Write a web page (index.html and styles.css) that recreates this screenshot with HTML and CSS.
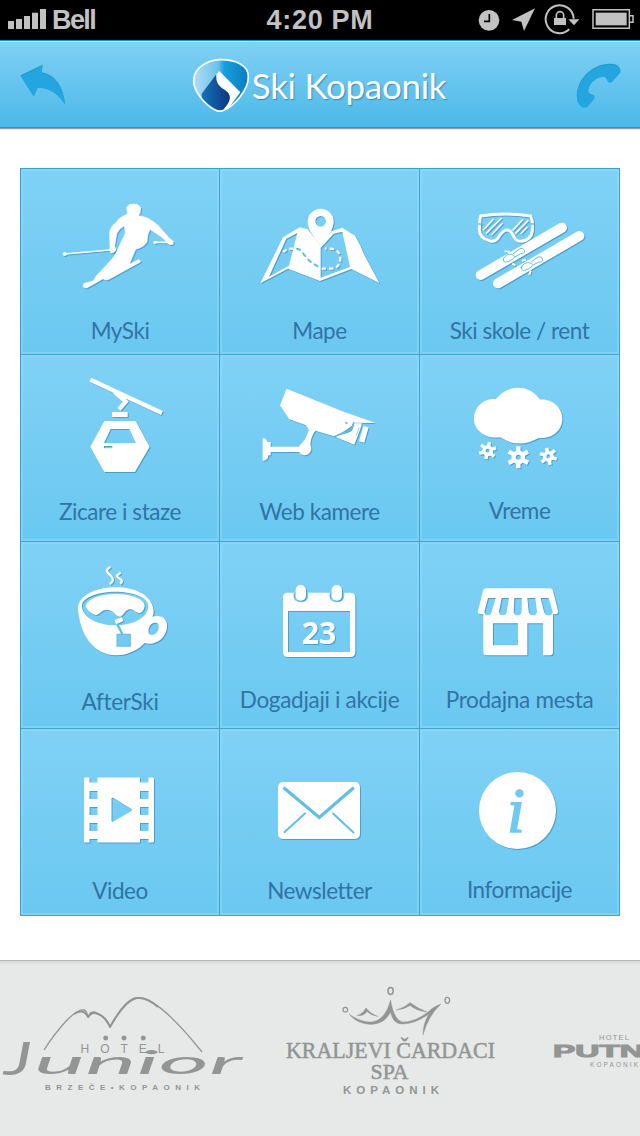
FILE: index.html
```html
<!DOCTYPE html>
<html lang="sr">
<head>
<meta charset="utf-8">
<title>Ski Kopaonik</title>
<link rel="stylesheet" href="styles.css">
</head>
<body>
<div class="status">
  <div class="carrier">
    <svg width="39" height="40" viewBox="24 0 117 120"><path d="M24 63h18v24H24zM48 57h18v30H48zM72 48h18v39H72zM96 38h18v49H96zM120 27h18v60h-18z"/></svg>
    <span>Bell</span>
  </div>
  <div class="clock">4:20 PM</div>
  <svg class="indicators" width="164" height="40" viewBox="468 0 492 120">
    <circle cx="507" cy="61" r="31"/>
    <path d="M508 42v22h-16" class="cut"/>
    <path d="M645 25L576 60l28 5 8 28z"/>
    <path d="M748 88A42 42 0 1 1 761 56" class="ring"/>
    <path d="M745 58h33l-16 18zM702 54h36v21h-36z"/>
    <path d="M709 56V46a11 11 0 0 1 22 0v10" class="shackle"/>
    <path d="M819 29h109v56H819zM930 47h9v20h-9" class="ring thin"/>
    <path d="M827 38h93v38h-93z"/>
  </svg>
</div>

<header class="topbar">
  <svg class="tool" width="60" height="60" viewBox="60 165 180 180"><path d="M62 229L128 197l-4 23c42 6 66 44 71 94-18-29-44-50-81-51l-13 27z"/></svg>
  <div class="brand">
    <svg width="58" height="60" viewBox="573 165 174 180">
      <defs>
        <linearGradient id="sky" x1="0" y1="0" x2="1" y2="0"><stop offset="0" stop-color="#b9e0f7"/><stop offset=".45" stop-color="#6cc2ec"/><stop offset=".55" stop-color="#17a0dc"/><stop offset="1" stop-color="#0879bd"/></linearGradient>
        <linearGradient id="deep" x1="0" y1="0" x2="1" y2="0"><stop offset="0" stop-color="#1473b9"/><stop offset="1" stop-color="#0b357b"/></linearGradient>
        <clipPath id="gem"><path d="M578 242c0-40 44-63 82-63s82 13 82 51c0 42-43 87-72 100-10 5-20 4-29-1-30-17-63-54-63-87z"/></clipPath>
      </defs>
      <g clip-path="url(#gem)">
        <path d="M570 170h180v170H570z" fill="url(#sky)"/>
        <path d="M654 212L602 281v60h84l4-62z" fill="url(#deep)"/>
        <path d="M654 212l64 65-40 54-10-3c24-26 24-44 5-57-20-13-29-22-27-48z" fill="#fff"/>
      </g>
      <path d="M578 242c0-40 44-63 82-63s82 13 82 51c0 42-43 87-72 100-10 5-20 4-29-1-30-17-63-54-63-87z" fill="none" stroke="#fff" stroke-width="5"/>
    </svg>
    <h1>Ski Kopaonik</h1>
  </div>
  <svg class="tool" width="60" height="60" viewBox="750 165 180 180"><path d="M859 195c16-2 27 0 34 5 7 6 10 13 7 19l-24 27c-5 4-9 3-12-1l-6-10c-3-5-8-4-14-3-21 5-36 20-39 39-1 6-1 11 4 13l10 4c5 3 5 7 2 11l-17 20c-6 6-14 5-20 1-11-8-15-22-13-39 5-43 44-81 88-86z"/></svg>
</header>

<main class="grid">
  <a class="tile r1">
    <svg width="198" height="145" viewBox="18 27 594 435">
      <path d="M335 142Q340 132 356 132Q372 132 377 143L375 160L370 167L385 170Q402 174 412 183Q430 193 441 209L462 233L475 244L474 253Q464 256 458 250Q446 234 424 221L405 208L399 222L396 245Q390 260 362 268L343 313L371 299Q378 301 376 306L282 358Q272 363 264 356L244 368L215 384Q204 384 204 376Q205 368 213 369L236 362Q243 345 256 335L292 296Q306 282 311 262L330 223Q333 208 327 198Q310 208 305 222L299 258L303 270Q296 281 288 278Q281 272 285 262L284 218Q286 200 302 189Q312 172 330 166L338 162Z" stroke="#fff" stroke-width="2" stroke-linejoin="round"/>
      <path d="M149 282L286 270M420 247h50" class="line" stroke-width="5"/><circle cx="149" cy="282" r="6"/><circle cx="420" cy="247" r="5"/>
    </svg>
    <span>MySki</span>
  </a>
  <a class="tile r1">
    <svg width="199" height="145" viewBox="0 27 597 435">
      <path fill-rule="evenodd" d="M121 370L189 232l50-30 24 6 39 49 32-43 33-11 38 24q18 30 28 58l45 84-84-42-94 36-96-37zM147 350l60-33 25-98-33 17zM302 353l88-32-23-106-26 6-39 43z"/>
      <path d="M302 257q-39-45-39-72a39 39 0 0 1 78 0q0 27-39 72zm0-57a15 15 0 1 0 0-32 15 15 0 0 0 0 32z" fill-rule="evenodd"/>
      <path d="M190 276q12-12 34-10" class="line" stroke-width="7" stroke-dasharray="12 8"/>
      <path d="M231 266q12 2 21 18l18 20 29 19" class="hole" stroke-width="6" stroke-dasharray="10 14"/>
      <path d="M305 326h25q30 0 31-30 0-26-30-30h-16" class="line" stroke-width="7" stroke-dasharray="13 9"/>
    </svg>
    <span>Mape</span>
  </a>
  <a class="tile r1">
    <svg width="199" height="145" viewBox="0 27 597 435">
      <path d="M182 168q74-12 150 0 8 18 5 46-4 27-33 30-15 0-21-12-10-22-22-22t-27 24q-7 12-24 9-32-8-32-35 0-26 4-40z" class="line" stroke-width="9"/>
      <path d="M175 192h10M331 192h10" class="hole" stroke-width="4"/>
      <path d="M190 210l31-33M198 221l47-47M214 225l34-36M278 211l31-33M286 221l39-40M302 222l20-21" class="line" stroke-width="5"/>
      <path d="M182 345L426 203M234 370L478 228" class="line round" stroke-width="30"/>
      <path d="M250 296q10-16 25-13 13 6 7 11-10 10-25 13-9-2-7-11zM304 321q10-16 25-13 13 6 7 11-10 10-25 13-9-2-7-11zM280 281l20-15q9-4 14 6-1 11-12 9l-16 9M334 306l20-15q9-4 14 6-1 11-12 9l-16 9" class="hole" stroke-width="3"/>
      <path d="M254 274l15 2M277 311l9 5M306 302l12-2M332 332l-4 13" class="line" stroke-width="6"/>
    </svg>
    <span>Ski skole / rent</span>
  </a>

  <a class="tile r2">
    <svg width="198" height="139" viewBox="18 0 594 417">
      <path d="M226 74L441 174M299 111l33 29-20 23" class="line" stroke-width="13"/>
      <path d="M291 171h47v15h-47z"/>
      <path fill-rule="evenodd" d="M268 198h94l42 77-44 76h-92l-42-76zM287 222l-20 42h96l-20-42zM267 273v7h25v-7z"/>
    </svg>
    <span>Zicare i staze</span>
  </a>
  <a class="tile r2">
    <svg width="199" height="139" viewBox="0 0 597 417">
      <path d="M200 101L365 168l102 36-65-1q-10 19-60 41l-56-17q-14 19-15 43a17 17 0 0 1-34 21h-85v10h-7q-2 18-17 16v-68q10 0 15 12h9v14h84l19-22 12-28-9-14-50-18-28-42z"/>
      <path d="M345 245l44-13q10-3 14-27h22l-1 9-21 55z"/>
      <path d="M438 215l-13 46" class="line" stroke-width="16"/>
      <path d="M417 218l-8 23" class="hole" stroke-width="2"/><circle cx="379" cy="204" r="4" fill="#76cdf3"/>
      <path d="M345 244l42-17q8-3 14-25" class="hole" stroke-width="4"/>
    </svg>
    <span>Web kamere</span>
  </a>
  <a class="tile r2 high">
    <svg width="199" height="139" viewBox="0 0 597 417">
      <path d="M228 132q28-34 67-34t66 36c36-3 66 25 66 57 0 36-31 61-71 58q-61 34-115-2c-43 6-79-20-79-56 0-35 29-62 66-59z"/>
      <defs><g id="flake"><circle r="14" class="line" stroke-width="13"/><path d="M0-15V-33M0 15V33M13-8L29-17M13 8l16 9M-13-8L-29-17M-13 8l-16 9" class="line" stroke-width="13"/></g></defs>
      <use href="#flake" transform="translate(295 307)"/>
      <use href="#flake" transform="translate(203 287) rotate(12) scale(.79)"/>
      <use href="#flake" transform="translate(385 304) rotate(-12) scale(.79)"/>
    </svg>
    <span>Vreme</span>
  </a>

  <a class="tile r3 low">
    <svg width="198" height="142" viewBox="18 -9 594 426">
      <path fill-rule="evenodd" d="M189 187c3-34 51-60 113-60 59 0 104 23 112 60 3 11 2 20-2 28 31-9 49 10 43 38-6 31-36 50-66 41-20 21-50 37-87 37-66 0-110-64-113-144zM201 180c-2 35 43 61 100 61s101-25 99-61c-4-25-51-40-99-40s-96 15-100 40zM401 264c5 10 20 6 26-4 6-11 7-23-2-26-17-4-27 14-24 30z"/>
      <path d="M212 181c10-22 48-34 89-34 44 0 89 14 88 37-3 12-7 20-15 20-17-1-18-15-35-10-10 2-15 21-26 21-12-1-16-20-36-21-17-1-25 17-36 16-17-7-28-19-29-29z"/>
      <path d="M301 232l22-10" class="line" stroke-width="13"/>
      <path d="M308 240l14 27M308 270h36v32h-36z" class="hole" stroke-width="7"/><path d="M308 270h36v32h-36z" fill="#73cbf2"/>
      <path d="M287 65c-22 12-6 20 1 28 10 10 6 18-4 24M317 83c-20 11-8 13 0 20 6 6 4 9-2 12" class="line" stroke-width="7"/>
    </svg>
    <span>AfterSki</span>
  </a>
  <a class="tile r3">
    <svg width="199" height="142" viewBox="0 -9 597 426">
      <path fill-rule="evenodd" d="M203 143h18v11q2 18 22 18t22-18v-11h64v11q2 18 22 18t22-18v-11h18q15 0 15 14v165q0 14-15 14H203q-14 0-14-14V157q0-14 14-14zM204 198v123h186V198z"/>
      <rect x="227" y="120" width="31" height="47" rx="15"/><rect x="335" y="120" width="31" height="47" rx="15"/>
      <text x="245" y="297" class="day" textLength="104">23</text>
    </svg>
    <span>Dogadjaji i akcije</span>
  </a>
  <a class="tile r3">
    <svg width="199" height="142" viewBox="600 -9 597 426">
      <path fill-rule="evenodd" d="M799 130h189q10 0 12 10l15 62q-2 8-16 5v115q0 9-9 9h-21v-96h-47v96H799q-9 0-9-9V207q-15 3-17-5l15-62q3-10 11-10zM804 159l-11 41q2 11 11 11 9-1 11-11l12-41zM845 159l-8 41q2 11 12 11 10-1 11-11l7-41zM883 159l-2 41q2 11 12 11t12-11v-41zM922 159l4 41q3 11 13 11t12-11l-5-41zM962 159l10 41q4 11 14 11t12-11l-12-41zM819 235v66h75v-66z"/>
    </svg>
    <span>Prodajna mesta</span>
  </a>

  <a class="tile r4">
    <svg width="198" height="144" viewBox="21 729 198 144">
      <path fill-rule="evenodd" d="M85.500 777.500h4v5h8v-5H140v5h8.500v-5h4q1.500 0 1.500 1.500v62q0 1.500-1.500 1.500h-4V839H140v3.500H97.500V839h-8v3.500h-4q-1.500 0-1.500-1.500v-62q0-1.500 1.500-1.500zM89.500 791v8h8v-8zm0 16v8h8v-8zm0 16v8h8v-8zM140 791v8h8.500v-8zm0 16v8h8.500v-8zm0 16v8h8.500v-8zM111.500 799v21.500q0 2 2 1l18-10.500q1.500-1 0-2l-18-11q-2-1-2 1z"/>
    </svg>
    <span>Video</span>
  </a>
  <a class="tile r4">
    <svg width="199" height="144" viewBox="220 729 199 144">
      <rect x="278" y="782" width="82" height="57" rx="5"/>
      <path d="M284.600 788.500l34.700 29 33.500-29" class="hole" stroke-width="3.200"/>
      <path d="M305 813.500L284.600 832M333 813.500l20.500 19" class="hole" stroke-width="2"/>
    </svg>
    <span>Newsletter</span>
  </a>
  <a class="tile r4 high">
    <svg width="199" height="144" viewBox="420 729 199 144">
      <circle cx="517.500" cy="810.500" r="38.500"/>
      <text x="507" y="831.500" class="info">i</text>
    </svg>
    <span>Informacije</span>
  </a>
</main>

<footer class="sponsors">
  <svg width="640" height="175" viewBox="0 961 640 175">
    <g class="mark">
      <path d="M44 1050C57 1030 75 1008 84 1010c4 1 2 5 5 7 0-5 4-6 8-4 7 2 10 9 13 14 7-12 18-29 29-29 16 0 43 29 63 54" stroke-width="1.300"/>
      <path d="M74 1014q10-6 14 3 4-6 10-3 8 3 12 13 17-31 29-29 9 0 19 9" stroke-width="2"/>
    </g>
    <g class="solid">
      <circle cx="105.700" cy="1038" r="2.300"/><circle cx="124" cy="1038" r="2.300"/><circle cx="143.300" cy="1038" r="2.300"/>
      <path d="M349 1014Q360 1022 371 1022Q385 1021 390.600 1000Q394 1021 403 1022Q415 1022 428 1012Q434 1006 441 1004Q428 1016 423 1035Q423 1023 429 1014Q415 1024 402 1024Q393 1024 390.500 1012Q385 1024 371 1024.500Q357 1024 349 1014Z"/>
      <path d="M357 1015.500q5-1 9-7.500 5 6 12 8.500-7-1-11-5-3 5-10 4zM396 1010q8-2 14-7.500 8 6 17 9.500-10-1-17-6.500-6 4-14 4.500z"/>
    </g>
    <g class="mark">
      <ellipse cx="390.600" cy="991" rx="2.600" ry="3.400" stroke-width="1.500"/><circle cx="345.300" cy="1009.700" r="2.300" stroke-width="1.200"/><ellipse cx="447.300" cy="1000.300" rx="2.300" ry="3" stroke-width="1.300"/>
    </g>
    <g class="words">
      <text x="80.500" y="1052.500" font-size="12" textLength="84">HOTEL</text>
      <text class="script"><tspan x="4" y="1075" font-size="46" textLength="28" lengthAdjust="spacingAndGlyphs">J</tspan><tspan x="34" y="1074" font-size="32" textLength="208" lengthAdjust="spacingAndGlyphs">unior</tspan></text>
      <text x="45" y="1090" font-size="8" textLength="155" class="bold">BRZEČE•KOPAONIK</text>
      <text class="serif" x="286" y="1057.500" font-size="22.500" textLength="209" lengthAdjust="spacingAndGlyphs">KRALJEVI ČARDACI</text>
      <text class="serif" x="370.500" y="1079" font-size="21.500" textLength="38" lengthAdjust="spacingAndGlyphs">SPA</text>
      <text x="343" y="1094" font-size="11.500" textLength="96" class="bold">KOPAONIK</text>
      <text x="599" y="1039.500" font-size="7.500" textLength="30">HOTEL</text>
      <text x="553" y="1056.500" font-size="16.500" textLength="91" lengthAdjust="spacingAndGlyphs" class="bold heavy">PUTN</text>
      <text x="590" y="1066.500" font-size="6.500" textLength="48">KOPAONIK</text>
    </g>
  </svg>
</footer>
</body>
</html>
```

FILE: styles.css
```css
* { box-sizing: border-box; }

body {
  margin: 0;
  width: 640px;
  height: 1136px;
  overflow: hidden;
  display: flex;
  flex-direction: column;
  background: #fff;
  font-family: Lato, sans-serif;
}

svg { display: block; flex: none; }

/* Status bar */
.status {
  height: 40px;
  display: grid;
  grid-template-columns: 238px 164px 238px;
  align-items: center;
  background: #000;
  color: #c2c2c2;
  font: bold 27px/40px "Liberation Sans", Arial, sans-serif;
}
.status svg { fill: #c2c2c2; }
.carrier { display: flex; gap: 5px; padding-left: 8px; letter-spacing: -1.6px; }
.clock { text-align: center; letter-spacing: .7px; }
.indicators { justify-self: end; }
.indicators .cut { fill: none; stroke: #000; stroke-width: 5; }
.indicators .ring { fill: none; stroke: #c2c2c2; stroke-width: 6; }
.indicators .thin { stroke-width: 4.500; }
.indicators .shackle { fill: none; stroke: #c2c2c2; stroke-width: 5; }

/* Title bar */
.topbar {
  height: 88px;
  display: flex;
  justify-content: space-between;
  align-items: center;
  padding: 1px 10px 0 20px;
  border-top: 1px solid #0d96d4;
  border-bottom: 1px solid #1a99d5;
  background: linear-gradient(#81d0f4, #4bb9e8);
  box-shadow: inset 0 1px 0 #c6eafa, 0 1px 1px #999;
}
.tool { fill: #23a6df; filter: drop-shadow(0 -1px 0 #2793c5); }
.brand { display: flex; align-items: center; gap: 2px; margin-right: 12px; }
h1 {
  margin: 0;
  color: #fff;
  font-size: 35px;
  font-weight: 400;
  line-height: 58px;
  letter-spacing: -.3px;
  text-shadow: 1px 1px 1px rgba(20, 80, 120, .5);
}

/* Menu grid */
.grid {
  margin: 40px 20px 44px;
  width: 600px;
  height: 748px;
  display: grid;
  grid-template-columns: 199px 200px 200px;
  grid-template-rows: 186px 187px 187px 187px;
  border-top: 1px solid #2ba5d7;
  border-left: 1px solid #2ba5d7;
}
.tile {
  display: flex;
  flex-direction: column;
  overflow: hidden;
  border-right: 1px solid #3ba6d4;
  border-bottom: 1px solid #3ba6d4;
  background: linear-gradient(#80d1f6, #6ac8f0);
  box-shadow: inset 0 0 0 2px rgba(160, 220, 247, .4);
}
.tile svg { fill: #fff; filter: drop-shadow(1px 1px .7px rgba(25, 95, 140, .42)); }
.tile .line { fill: none; stroke: #fff; }
.tile .round { stroke-linecap: round; }
.tile .hole { fill: none; stroke: #62bde7; stroke-linecap: round; }
.tile span {
  margin-top: -1px;
  color: #2f74a5;
  font-size: 22.5px;
  line-height: 36px;
  text-align: center;
  white-space: nowrap;
  letter-spacing: -.45px;
}
.r2 span, .r4 span { margin-top: 0; }
.r3 span { margin-top: -2px; letter-spacing: -.3px; }
.tile.high span { margin-top: -1px; }
.tile.low span { margin-top: 0; }
.day { font: bold 91px "Open Sans", sans-serif; }
.info { font: italic 64px "Liberation Serif", serif; fill: #6fc9f1; stroke: #6fc9f1; stroke-width: 1.6; }

/* Sponsor strip */
.sponsors {
  height: 176px;
  border-top: 1px solid #b4b9b7;
  background: linear-gradient(#d5d8d7, #e6e9e8 4px);
}
.mark { fill: none; stroke: #929594; stroke-linejoin: round; }
.solid { fill: #929594; stroke: #929594; stroke-width: .4; }
.words { fill: #929594; font-family: "Liberation Sans", sans-serif; }
.bold { font-weight: bold; }
.heavy { stroke: #929594; stroke-width: 1; }
.serif { font-family: "Liberation Serif", serif; stroke: #929594; stroke-width: .5; }
.script { font-family: Lato, sans-serif; font-style: italic; }
```
